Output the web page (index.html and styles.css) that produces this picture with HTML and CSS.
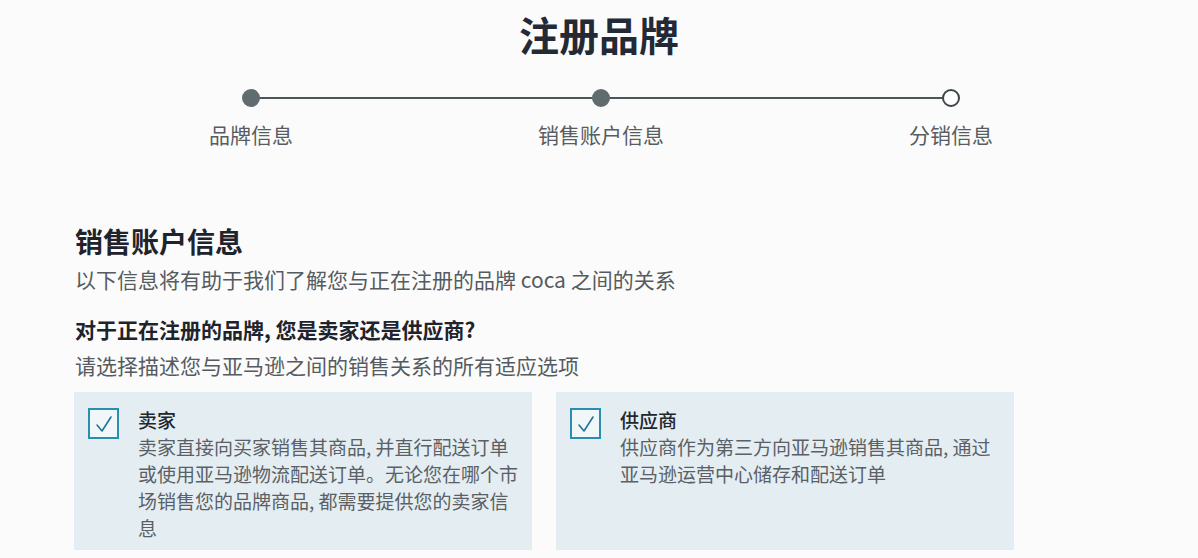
FILE: index.html
```html
<!DOCTYPE html>
<html lang="zh-CN">
<head>
    <meta charset="UTF-8">
    <meta name="viewport" content="width=device-width, initial-scale=1.0">
    <title>注册品牌</title>
    <link rel="stylesheet" href="styles.css">
</head>
<body>
    <h1 class="page-title">注册品牌</h1>

    <div class="stepper">
        <div class="step done">
            <span class="step-dot"></span>
            <span class="step-label">品牌信息</span>
        </div>
        <div class="step done">
            <span class="step-dot"></span>
            <span class="step-label">销售账户信息</span>
        </div>
        <div class="step">
            <span class="step-dot"></span>
            <span class="step-label">分销信息</span>
        </div>
    </div>

    <div class="section">
        <h2 class="section-title">销售账户信息</h2>
        <p class="section-desc">以下信息将有助于我们了解您与正在注册的品牌 coca 之间的关系</p>

        <p class="question">对于正在注册的品牌, 您是卖家还是供应商?</p>
        <p class="hint">请选择描述您与亚马逊之间的销售关系的所有适应选项</p>

        <div class="options">
            <label class="option">
                <span class="check">
                    <svg width="26" height="26" viewBox="0 0 26 26">
                        <polyline points="6,14 11,20 20,6" fill="none" stroke="#1d7896" stroke-width="1.6" stroke-linecap="round" stroke-linejoin="round"/>
                    </svg>
                </span>
                <span class="option-text">
                    <span class="option-title">卖家</span>
                    <span class="option-desc">卖家直接向买家销售其商品, 并直行配送订单或使用亚马逊物流配送订单。无论您在哪个市场销售您的品牌商品, 都需要提供您的卖家信息</span>
                </span>
            </label>
            <label class="option">
                <span class="check">
                    <svg width="26" height="26" viewBox="0 0 26 26">
                        <polyline points="6,14 11,20 20,6" fill="none" stroke="#1d7896" stroke-width="1.6" stroke-linecap="round" stroke-linejoin="round"/>
                    </svg>
                </span>
                <span class="option-text">
                    <span class="option-title">供应商</span>
                    <span class="option-desc">供应商作为第三方向亚马逊销售其商品, 通过亚马逊运营中心储存和配送订单</span>
                </span>
            </label>
        </div>
    </div>
</body>
</html>
```

FILE: styles.css
```css
* {
    margin: 0;
    padding: 0;
    box-sizing: border-box;
}

body {
    background: #fbfbfb;
    font-family: "Noto Sans CJK SC", "Noto Sans", sans-serif;
    color: #555b60;
}

.page-title {
    margin-top: 10px;
    text-align: center;
    font-size: 40px;
    line-height: 48px;
    font-weight: 700;
    color: #232a36;
}

/* stepper */
.stepper {
    position: relative;
    display: grid;
    grid-template-columns: repeat(3, 350px);
    margin: 31px 0 0 76px;
    width: 1050px;
}

.stepper::before {
    content: "";
    position: absolute;
    top: 8px;
    left: 175px;
    right: 175px;
    height: 2px;
    background: #4c5659;
}

.step {
    display: flex;
    flex-direction: column;
    align-items: center;
}

.step-dot {
    position: relative;
    width: 18px;
    height: 18px;
    border-radius: 50%;
    background: #fff;
    border: 2px solid #3f4649;
}

.step.done .step-dot {
    background: #616c70;
    border-color: #616c70;
}

.step-label {
    margin-top: 13px;
    font-size: 21px;
    line-height: 28px;
    color: #575d62;
}

/* section */
.section {
    padding-left: 75px;
}

.section-title {
    margin-top: 75px;
    font-size: 28px;
    line-height: 36px;
    font-weight: 700;
    color: #1f232b;
}

.section-desc {
    margin-top: 5px;
    font-size: 21px;
    line-height: 30px;
}

.question {
    margin-top: 20px;
    font-size: 21px;
    line-height: 30px;
    font-weight: 700;
    color: #1f232b;
}

.hint {
    margin-top: 6px;
    font-size: 21px;
    line-height: 30px;
}

.options {
    display: grid;
    grid-template-columns: 458px 458px;
    gap: 24px;
    margin-top: 12px;
    margin-left: -1px;
}

.option {
    display: flex;
    gap: 19px;
    height: 158px;
    padding: 14px 14px 0;
    background: #e4eef2;
}

.check {
    flex: none;
    display: flex;
    align-items: center;
    justify-content: center;
    width: 31px;
    height: 31px;
    margin-top: 2px;
    border: 2px solid #2b8db0;
    background: #f1f7f9;
}

.option-text {
    display: flex;
    flex-direction: column;
    width: 386px;
}

.option-title {
    font-size: 19px;
    line-height: 27px;
    font-weight: 500;
    color: #22272e;
}

.option-desc {
    font-size: 19px;
    line-height: 27px;
    color: #5a6065;
}
```
